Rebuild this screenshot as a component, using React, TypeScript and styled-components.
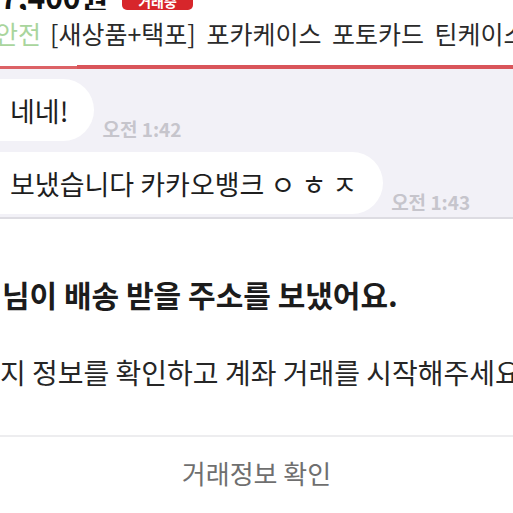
import styled, { createGlobalStyle } from 'styled-components';

const GlobalStyle = createGlobalStyle`
  html, body {
    margin: 0;
    padding: 0;
    background: #ffffff;
    overflow: hidden;
  }
  body {
    font-family: 'Noto Sans CJK KR', 'Noto Sans', sans-serif;
    color: #222;
  }
`;

const messages = [
  { text: '네네!', time: '오전 1:42' },
  { text: '보냈습니다 카카오뱅크 ㅇ ㅎ ㅈ', time: '오전 1:43' },
];

const App = () => {
  return (
    <>
      <GlobalStyle />
      <Screen>
        <ProductHeader>
          <PriceRow>
            <Price>7,400원</Price>
            <Badge>거래중</Badge>
          </PriceRow>
          <TitleRow>
            <SafeTag>안전</SafeTag>
            [새상품+택포] 포카케이스 포토카드 틴케이스
          </TitleRow>
        </ProductHeader>
        <ProgressBar>
          <ProgressFill />
        </ProgressBar>
        <ChatArea>
          {messages.map((m) => (
            <MessageRow key={m.time}>
              <Bubble>{m.text}</Bubble>
              <Time>{m.time}</Time>
            </MessageRow>
          ))}
        </ChatArea>
        <Notice>
          <NoticeTitle>님이 배송 받을 주소를 보냈어요.</NoticeTitle>
          <NoticeBody>지 정보를 확인하고 계좌 거래를 시작해주세요.</NoticeBody>
        </Notice>
        <ActionButton>거래정보 확인</ActionButton>
      </Screen>
    </>
  );
};

export default App;

const Screen = styled.div`
  width: 513px;
  height: 513px;
  display: flex;
  flex-direction: column;
  overflow: hidden;
`;

const ProductHeader = styled.div`
  display: flex;
  flex-direction: column;
`;

const PriceRow = styled.div`
  height: 10px;
  display: flex;
  align-items: flex-end;
  gap: 14px;
  overflow: hidden;
`;

const Price = styled.span`
  font-size: 30px;
  font-weight: 700;
  line-height: 1;
  color: #111;
  margin-bottom: -1px;
`;

const Badge = styled.span`
  background: #d7262b;
  color: #fff;
  font-size: 14px;
  font-weight: 700;
  line-height: 1;
  padding: 8px 16px 2px;
  border-radius: 0 0 5px 5px;
`;

const TitleRow = styled.div`
  margin-top: 7px;
  height: 32px;
  font-size: 25px;
  line-height: 32px;
  word-spacing: 5px;
  color: #2a2a2a;
  white-space: nowrap;
  overflow: hidden;
`;

const SafeTag = styled.span`
  color: #a9d59d;
  margin-left: -5px;
  margin-right: 9px;
`;

const ProgressBar = styled.div`
  margin-top: 16px;
  height: 4px;
  display: flex;
  align-items: flex-end;
  justify-content: flex-end;
  background: linear-gradient(#ffffff 0 1px, #dc6266 1px);
`;

const ProgressFill = styled.div`
  width: 436px;
  height: 4px;
  background: #d9555a;
`;

const ChatArea = styled.div`
  height: 150px;
  background: #f2f1f7;
  border-bottom: 2px solid #dddce2;
  padding-top: 10px;
  display: flex;
  flex-direction: column;
  gap: 11px;
  box-sizing: border-box;
`;

const MessageRow = styled.div`
  display: flex;
  align-items: flex-end;
  gap: 8px;
`;

const Bubble = styled.div`
  background: #ffffff;
  border-radius: 0 31px 31px 0;
  height: 62px;
  box-sizing: border-box;
  padding: 0 26px 0 10px;
  display: flex;
  align-items: center;
  font-size: 27px;
  color: #1e1e1e;
  white-space: nowrap;
`;

const Time = styled.span`
  font-size: 19px;
  font-weight: 700;
  color: #c6c5cc;
  line-height: 1;
  margin-bottom: 3px;
  white-space: nowrap;
`;

const Notice = styled.div`
  flex: 1;
  display: flex;
  flex-direction: column;
  border-bottom: 2px solid #ededef;
  padding-top: 56px;
  box-sizing: border-box;
`;

const NoticeTitle = styled.div`
  font-size: 30px;
  font-weight: 700;
  line-height: 38px;
  color: #1c1c1c;
  padding-left: 2px;
  white-space: nowrap;
`;

const NoticeBody = styled.div`
  margin-top: 40px;
  font-size: 28px;
  line-height: 38px;
  color: #262626;
  white-space: nowrap;
`;

const ActionButton = styled.div`
  height: 76px;
  display: flex;
  align-items: center;
  justify-content: center;
  font-size: 26px;
  color: #6f6f6f;
  padding-bottom: 6px;
  box-sizing: border-box;
`;
